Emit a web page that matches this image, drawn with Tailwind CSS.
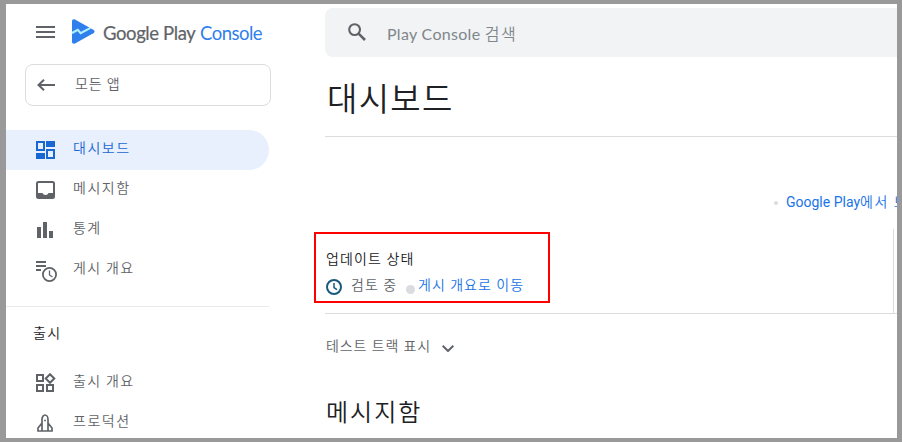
<!DOCTYPE html>
<html lang="ko">
<head>
<meta charset="utf-8">
<title>Google Play Console</title>
<script src="https://cdn.jsdelivr.net/npm/@tailwindcss/browser@4"></script>
</head>
<body class="h-[442px] w-[902px] overflow-hidden bg-[#999] pt-1 pl-1.5 font-['Roboto','Noto_Sans_CJK_KR',sans-serif] text-sm font-[350] whitespace-nowrap text-[#5f6368]">
<div class="flex h-[434px] w-[891px] overflow-hidden bg-white">
  <aside class="w-[319px] shrink-0">
    <header class="flex h-[60px] items-start pl-[30px]">
      <svg class="mt-[22px] h-3 w-[19px]" viewBox="0 0 19 12" fill="#5f6368"><path d="M0 0h19v2H0zM0 5h19v2H0zM0 10h19v2H0z"/></svg>
      <svg class="mt-[15px] ml-[17px] h-[25px] w-[23px]" viewBox="0 0 23 25"><path d="M0 2.200C0 .5 1.500-.3 3 .5l18.300 10.200c1.600.9 1.600 2.700 0 3.600L3 24.500c-1.500.8-3 0-3-1.700z" fill="#2f80ed"/><path d="M0 14l5.800-3.200 2.800 3.400L18.500 8.800" fill="none" stroke="#b5f1fc" stroke-width="2"/></svg>
      <div class="mt-[15px] ml-2 flex font-['Lato',sans-serif] text-[18.500px] leading-7 font-normal"><span class="w-[97px] tracking-[-0.4px] [-webkit-text-stroke:0.2px_#5f6368]">Google Play</span><span class="tracking-[-0.5px] text-[#2f80ed]">Console</span></div>
    </header>
    <div class="ml-[19px] flex h-[42px] w-[246px] items-center rounded-lg border border-[#dadce0] pl-[11px]">
      <svg class="h-3 w-[18px]" viewBox="0 0 18 12" fill="none" stroke="#5f6368" stroke-width="2"><path d="M18 6H2M7 .8L1.500 6 7 11.200"/></svg>
      <span class="-mt-[3px] ml-5 tracking-[0.9px]">모든 앱</span>
    </div>
    <nav class="mt-6">
      <a class="flex h-10 w-[263px] items-center rounded-r-full bg-[#e8f0fe] pl-[30px] text-[#1967d2]">
        <svg class="h-[18px] w-[19px]" viewBox="0 0 19 18" fill="none" stroke="currentColor" stroke-width="2"><path d="M1 1h7v8H1zM11 9h7v8h-7z"/><path fill="currentColor" stroke="none" d="M10 0h9v6h-9zM0 12h9v6H0z"/></svg>
        <span class="-mt-1 ml-[18px] tracking-[1.5px]">대시보드</span>
      </a>
      <a class="flex h-10 items-center pl-[30px]">
        <svg class="h-[18px] w-[19px]" viewBox="0 0 19 18"><rect x="1" y="1" width="17" height="16" rx="1.500" fill="none" stroke="#5f6368" stroke-width="2"/><path fill="#5f6368" d="M1 12h5.500c.7 2.500 5.300 2.500 6 0H18v5H1z"/></svg>
        <span class="-mt-1 ml-[18px] tracking-[1.5px]">메시지함</span>
      </a>
      <a class="flex h-10 items-center pl-[30px]">
        <svg class="h-4 w-[19px]" viewBox="0 0 19 16" fill="#5f6368"><path d="M1 5h4v11H1zM7 0h4v16H7zM13 9h4v7h-4z"/></svg>
        <span class="-mt-1 ml-[18px] tracking-[1.4px]">통계</span>
      </a>
      <a class="flex h-10 items-center pl-[30px]">
        <svg class="mt-0.5 h-[21px] w-[21px]" viewBox="0 0 21 21" fill="none" stroke="#5f6368"><path d="M0 1h10M0 5h10M0 9h5" stroke-width="2"/><circle cx="13.500" cy="13.500" r="6.600" stroke-width="1.800"/><path d="M13.500 9.500v4.500l3 2" stroke-width="1.300"/></svg>
        <span class="-mt-1 ml-4 tracking-[1.300px]">게시 개요</span>
      </a>
    </nav>
    <section class="mt-4 w-[263px] border-t border-[#e8eaed]">
      <h2 class="pt-4 pl-[27px] leading-5 tracking-[1.4px] text-[#202124]">출시</h2>
      <a class="mt-[19px] flex h-10 items-center pl-[30px]">
        <svg class="h-[19px] w-5" viewBox="0 0 20 19" fill="none" stroke="#5f6368" stroke-width="2"><path d="M1 2h6v6H1zM1 12h6v6H1zM11 12h6v6h-6zM14 1.200L18.300 5.500 14 9.800 9.700 5.500z"/></svg>
        <span class="-mt-[3px] ml-[17px] tracking-[1.300px]">출시 개요</span>
      </a>
      <a class="flex h-10 items-center pl-[31px]">
        <svg class="mt-0.5 h-[18px] w-4" viewBox="0 0 16 18" fill="none" stroke="#5f6368" stroke-width="1.700"><path d="M5 17V5.500C5 3 6.500 1 8 1s3 2 3 4.500V17M5 9l-4 5v3h14v-3l-4-5"/><circle cx="8" cy="6.500" r=".9" fill="#5f6368" stroke="none"/></svg>
        <span class="-mt-0.5 ml-5 tracking-[1.5px]">프로덕션</span>
      </a>
    </section>
  </aside>
  <main class="w-[572px] shrink-0">
    <div class="mt-1 flex h-[49px] items-center rounded-l-lg bg-[#f1f3f4] pl-[23px]">
      <svg class="-mt-0.5 h-[18px] w-[18px]" viewBox="0 0 18 18" fill="none" stroke="#5f6368"><circle cx="6.600" cy="6.600" r="5.400" stroke-width="2.100"/><path d="M10.600 10.600l6.400 6.400" stroke-width="2.500"/></svg>
      <span class="mt-[3px] ml-[21px] font-['Lato','Noto_Sans_CJK_KR',sans-serif] text-base font-normal tracking-[0.3px] text-[#80868b]">Play Console <span class="font-[350] tracking-[1.5px]">검색</span></span>
    </div>
    <h1 class="mt-4 h-16 border-b border-[#dadce0] pl-0.5 text-[33px] leading-[53px] tracking-[1.300px] text-[#202124]">대시보드</h1>
    <div class="flex h-[92px] items-center pt-[38px] pl-[449px]">
      <span class="mt-0.5 size-1 shrink-0 rounded-full bg-[#dadce0]"></span>
      <a class="ml-2 shrink-0 font-normal text-[#1a73e8]">Google Play<span class="font-[350] tracking-[1.5px]">에서 보기</span></a>
    </div>
    <section class="flex h-[85px] border-b border-[#dadce0]">
      <div class="relative w-[569px] shrink-0 border-r border-[#dadce0] pt-5 pl-px">
        <div class="absolute top-[3px] -left-[11px] h-[71px] w-[236px] border-2 border-[#ff0000]"></div>
        <h3 class="leading-5 tracking-[1.1px] text-[#202124]">업데이트 상태</h3>
        <div class="mt-[6px] flex h-5 items-center">
          <svg class="mt-1 size-4" viewBox="0 0 16 16" fill="none" stroke="#185a7d" stroke-width="2"><circle cx="8" cy="8" r="7"/><path d="M8 4v4.500l3 2.200" stroke-width="1.500"/></svg>
          <span class="ml-[9px] tracking-[1px]">검토 중</span>
          <span class="mt-2 ml-[9px] size-[9px] rounded-full bg-[#dadce0]"></span>
          <a class="ml-[3px] tracking-[1px] text-[#1a73e8]">게시 개요로 이동</a>
        </div>
      </div>
    </section>
    <button class="mt-[22px] ml-px flex h-5 items-center"><span class="tracking-[0.9px]">테스트 트랙 표시</span><svg class="mt-1 ml-[11px] h-[7px] w-3" viewBox="0 0 12 7" fill="none" stroke="#5f6368" stroke-width="2"><path d="M.7.700L6 6 11.300.700"/></svg></button>
    <h2 class="mt-[39px] ml-px text-2xl leading-9 tracking-[2px] text-[#202124]">메시지함</h2>
  </main>
</div>
</body>
</html>
